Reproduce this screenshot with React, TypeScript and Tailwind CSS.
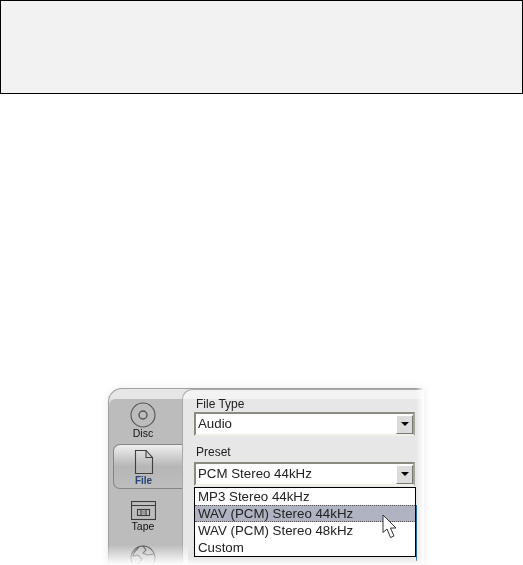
import { ReactNode } from "react"

const DiscIcon = () => (
  <svg width="26" height="26" viewBox="0 0 26 26" fill="none" stroke="#555" strokeWidth="1.1">
    <circle cx="13" cy="13" r="12" />
    <circle cx="13" cy="13" r="4" strokeWidth="1.4" />
  </svg>
)

const FileIcon = () => (
  <svg width="20" height="26" viewBox="0 0 20 26" fill="none" stroke="#3f3f3f" strokeWidth="1.1">
    <path d="M1.5 1.5H12L18.5 8.5V24.5H1.5Z" />
    <path d="M12 1.5V8.5H18.5" />
  </svg>
)

const TapeIcon = () => (
  <svg width="25" height="20" viewBox="0 0 25 20" fill="none" stroke="#3a3a3a" strokeWidth="1.1">
    <rect x="0.5" y="0.5" width="24" height="18" />
    <path d="M0.5 4.5H24.5" />
    <rect x="6.5" y="8.5" width="12" height="6" />
    <path d="M10 8.5V14.5M15 8.5V14.5" />
    <rect x="11" y="9.5" width="3" height="4" fill="#999" stroke="none" />
  </svg>
)

const GlobeIcon = () => (
  <svg width="26" height="26" viewBox="0 0 26 26" fill="none" stroke="#4a4a4a" strokeWidth="1.1">
    <circle cx="13" cy="13" r="12" />
    <path d="M9 2C6 5 3 8 3 11L8 10L12 14L9 18L13 20L19 24M13 1L16 5L13 8L17 10L24 9M9 18L5 20" />
  </svg>
)

const Cursor = () => (
  <svg width="15" height="25" viewBox="0 0 15 25" className="absolute left-[187px] top-[26px]">
    <path
      d="M1 1V18.5L5 15L8.5 23.5L12 22L8.5 14H14Z"
      fill="#fff"
      stroke="#333"
      strokeWidth="1"
      strokeLinejoin="round"
    />
  </svg>
)

const SideItem = ({ label, icon }: { label: string; icon: ReactNode }) => (
  <div className="flex flex-col items-center text-[10.5px] leading-[10px] text-[#111]">
    {icon}
    <span>{label}</span>
  </div>
)

const Combo = ({ value }: { value: string }) => (
  <div className="flex h-[24px] w-[221px] items-center justify-between border-2 border-t-[#8a8a80] border-l-[#8a8a80] border-r-[#a4a49a] border-b-[#f1f0e6] bg-white pl-[2px]">
    <span className="text-[13.3px] leading-[18px] text-[#222]">{value}</span>
    <div className="flex h-[19px] w-[17px] items-center justify-center border border-t-white border-l-white border-r-[#777] border-b-[#777] bg-[#dcdcdc]">
      <div className="h-0 w-0 border-x-[4px] border-t-[4px] border-x-transparent border-t-black" />
    </div>
  </div>
)

const presets = ["MP3 Stereo 44kHz", "WAV (PCM) Stereo 44kHz", "WAV (PCM) Stereo 48kHz", "Custom"]

export default function App() {
  return (
    <div className="h-[565px] w-[523px] overflow-hidden bg-white font-['Liberation_Sans',Arial,sans-serif]">
      <div className="h-[94px] w-full border border-black bg-[#f2f2f2]" />

      <div className="relative ml-[108px] mt-[294px] h-[177px] w-[316px] blur-[0.35px]">
        <div className="flex h-full overflow-hidden rounded-tl-[14px] border-t border-l border-[#a0a0a0] bg-[#e6e6e6] shadow-[0_0_8px_rgba(0,0,0,0.08)]">
          <div className="flex w-[74px] shrink-0 flex-col pt-[10px]">
            <div className="flex flex-1 flex-col items-center rounded-tl-[6px] bg-[#bcbcbc] pr-[6px] pt-[3px]">
              <SideItem label="Disc" icon={<DiscIcon />} />
              <div className="ml-[4px] mt-[6px] flex h-[45px] w-[69px] flex-col items-center self-start rounded-l-[7px] border border-r-0 border-[#858585] bg-gradient-to-b from-[#efefef] via-[#b6b6b6] to-[#bdbdbd] pr-[9px] pt-[4px] text-[10px] font-bold leading-[10px] text-[#23437a]">
                <FileIcon />
                <span className="mt-[1px]">File</span>
              </div>
              <div className="mt-[12px]">
                <SideItem label="Tape" icon={<TapeIcon />} />
              </div>
              <div className="mt-[14px]">
                <GlobeIcon />
              </div>
            </div>
          </div>

          <div className="-ml-[1px] flex-1 rounded-tl-[10px] border-t border-l border-[#a8a8a8] bg-[linear-gradient(#f3f3f3_0,#f3f3f3_9px,#e7e7e7_9px)]">
            <div className="pl-[11px] pt-[7px]">
              <div className="pl-[2px] text-[12px] leading-[14px] text-[#222]">File Type</div>
              <div className="mt-[1px]">
                <Combo value="Audio" />
              </div>
              <div className="mt-[9px] pl-[2px] text-[12px] leading-[14px] text-[#222]">Preset</div>
              <div className="mt-[3px]">
                <Combo value="PCM Stereo 44kHz" />
              </div>
              <div className="relative mt-[1px] h-[70px] w-[222px] border border-black bg-white text-[13.3px] leading-[17px] text-[#222]">
                {presets.map((p) => (
                  <div
                    key={p}
                    className={
                      p === "WAV (PCM) Stereo 44kHz"
                        ? "border-y border-dotted border-[#555] bg-[#b0b3c2] pl-[3px] leading-[15px]"
                        : "pl-[3px]"
                    }
                  >
                    {p}
                  </div>
                ))}
                <Cursor />
              </div>
            </div>
          </div>
        </div>

        <div className="absolute right-[7px] top-[117px] h-[56px] w-[1px] bg-[#1f5f96]" />
        <div className="absolute bottom-0 left-0 h-[20px] w-[80px] bg-gradient-to-t from-white to-transparent" />
        <div className="absolute bottom-0 left-[80px] right-0 h-[7px] bg-gradient-to-t from-white to-transparent" />
        <div className="absolute inset-y-0 right-0 w-[8px] bg-gradient-to-l from-white to-transparent" />
      </div>
    </div>
  )
}
